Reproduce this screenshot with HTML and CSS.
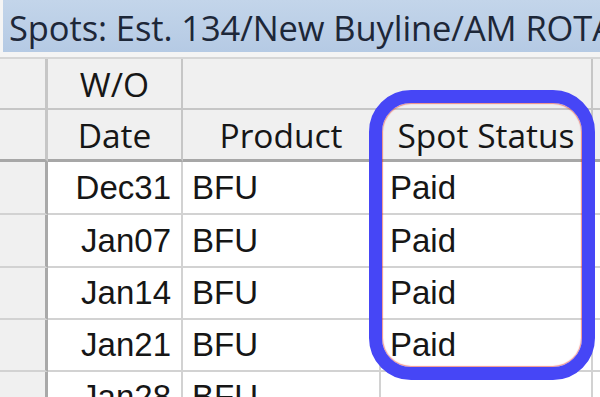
FILE: index.html
```html
<!DOCTYPE html>
<html>
<head>
<meta charset="utf-8">
<link rel="stylesheet" href="styles.css">
</head>
<body>
<div class="window">
  <div class="titlebar"><span class="title">Spots: Est. 134/New Buyline/AM ROTA</span></div>
  <div class="gap"></div>
  <div class="grid">
    <div class="c rh hd"></div>
    <div class="c hd">W/O</div>
    <div class="c hd span2"></div>
    <div class="c hd last"></div>

    <div class="c rh hd b2"></div>
    <div class="c hd b2">Date</div>
    <div class="c hd b2">Product</div>
    <div class="c hd b2">Spot Status</div>
    <div class="c hd b2 last"></div>

    <div class="c rh"></div><div class="c d r">Dec31</div><div class="c d">BFU</div><div class="c d">Paid</div><div class="c d last"></div>
    <div class="c rh"></div><div class="c d r">Jan07</div><div class="c d">BFU</div><div class="c d">Paid</div><div class="c d last"></div>
    <div class="c rh"></div><div class="c d r">Jan14</div><div class="c d">BFU</div><div class="c d">Paid</div><div class="c d last"></div>
    <div class="c rh"></div><div class="c d r">Jan21</div><div class="c d">BFU</div><div class="c d">Paid</div><div class="c d last"></div>
    <div class="c rh"></div><div class="c d r">Jan28</div><div class="c d">BFU</div><div class="c d"></div><div class="c d last"></div>
  </div>
  <div class="highlight"></div>
</div>
</body>
</html>
```
FILE: styles.css
```css
html, body {
  margin: 0;
  padding: 0;
  width: 600px;
  height: 397px;
  overflow: hidden;
  background: #f5f5f5;
}
.window {
  position: relative;
  width: 600px;
  height: 397px;
  overflow: hidden;
}
.titlebar {
  margin-left: 3px;
  height: 52px;
  background: linear-gradient(#c3d5ea, #b5cae4);
  display: flex;
  align-items: center;
  padding-left: 6px;
  white-space: nowrap;
  overflow: hidden;
}
.title {
  font-family: "Open Sans", sans-serif;
  font-size: 34.5px;
  color: #1d2738;
  letter-spacing: -0.1px;
  margin-top: 2px;
}
.gap {
  height: 5px;
  background: #f4f4f4;
}
.grid {
  display: grid;
  grid-template-columns: 48px 135px 198px 212px 1fr;
  grid-template-rows: 51px 52px 53px 53px 52px 52px 52px;
  background: #fff;
  border-top: 2px solid #d6d6d6;
}
.c {
  border-right: 2px solid #d2d2d2;
  border-bottom: 2px solid #d2d2d2;
  display: flex;
  align-items: center;
  white-space: nowrap;
  overflow: hidden;
  color: #161616;
}
.rh {
  background: #f0f0f0;
  border-right: 3px solid #a9a9a9;
}
.hd {
  background: #f0f0f0;
  justify-content: center;
  font-family: "Open Sans", sans-serif;
  font-size: 33.5px;
  border-right-color: #c6c6c6;
  border-bottom-color: #c6c6c6;
}
.span2 {
  grid-column: span 2;
}
.b2 {
  border-bottom: 3px solid #a7a7a7;
}
.d {
  font-family: "Liberation Sans", Arial, sans-serif;
  font-size: 33px;
  padding-left: 9px;
  padding-right: 10px;
}
.r {
  justify-content: flex-end;
}
.last {
  border-right: none;
}
.highlight {
  position: absolute;
  left: 369px;
  top: 90px;
  width: 200px;
  height: 264px;
  border: 13px solid #4646f6;
  border-radius: 42px;
  box-shadow: inset 0 0 1px 1px rgba(230, 40, 30, 0.5);
}
```
